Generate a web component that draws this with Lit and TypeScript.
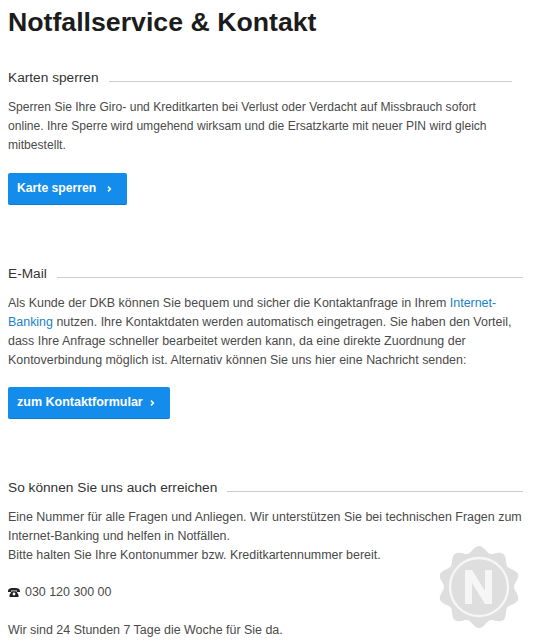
import { LitElement, html, css } from "lit";
import { customElement } from "lit/decorators.js";

@customElement("app-root")
export class AppRoot extends LitElement {
  static styles = css`
    :host {
      display: block;
      position: relative;
      width: 534px;
      height: 642px;
      overflow: hidden;
      background: #fff;
      font-family: "Liberation Sans", Arial, sans-serif;
      color: #4a4a4a;
      font-size: 12.45px;
      line-height: 19px;
    }
    .page { padding: 6px 11px 0 8px; }
    h1 {
      margin: 0 0 29px;
      font-size: 26.7px;
      line-height: 32px;
      font-weight: 700;
      color: #1c1c1c;
    }
    .head {
      display: flex;
      align-items: center;
      gap: 10px;
      height: 20px;
      margin: 0 0 11px;
      font-size: 13.7px;
      font-weight: 400;
      color: #333;
    }
    .head::after {
      content: "";
      flex: 1;
      height: 1px;
      margin-top: 8px;
      background: #ccc;
    }
    .s1 { margin-right: 11px; font-size: 12.1px; }
    p { margin: 0; }
    a { color: #1a7fc9; text-decoration: none; }
    .btn {
      display: inline-flex;
      align-items: center;
      gap: 7px;
      height: 32px;
      padding: 0 15px 0 9px;
      margin-top: 17px;
      background: #148ceb;
      border-radius: 2px;
      color: #fff;
      font-weight: 700;
      font-size: 12.5px;
      border-bottom: 1px solid #1078cc;
      box-sizing: border-box;
    }
    .s1 .btn { font-size: 12.2px; gap: 11px; margin-top: 18px; }
    .btn svg { display: block; }
    .s2 { margin-top: 58px; }
    .s3 { margin-top: 58px; }
    .phone { margin-top: 18px; display: flex; align-items: center; gap: 5px; }
    .phone svg { display: block; }
    .closing { margin-top: 19px; }
    .seal {
      position: absolute;
      left: 437px;
      top: 545px;
      width: 84px;
      height: 84px;
    }
  `;

  chevron() {
    return html`<svg width="5" height="6" viewBox="0 0 5 6"><path d="M1 .6 L3.4 3 L1 5.4" fill="none" stroke="#fff" stroke-width="1.5"/></svg>`;
  }

  render() {
    const n = 10;
    const R = 38, amp = 3;
    let d = "";
    for (let i = 0; i <= 180; i++) {
      const t = (i / 180) * Math.PI * 2;
      const r = R + amp * Math.cos(n * t);
      const x = 42 + r * Math.sin(t);
      const y = 42 - r * Math.cos(t);
      d += (i ? "L" : "M") + x.toFixed(2) + " " + y.toFixed(2);
    }
    d += "Z";
    return html`
      <div class="page">
        <h1>Notfallservice &amp; Kontakt</h1>
        <section class="s1">
          <h2 class="head">Karten sperren</h2>
          <p>Sperren Sie Ihre Giro- und Kreditkarten bei Verlust oder Verdacht auf Missbrauch sofort online. Ihre Sperre wird umgehend wirksam und die Ersatzkarte mit neuer PIN wird gleich mitbestellt.</p>
          <div class="btn">Karte sperren ${this.chevron()}</div>
        </section>
        <section class="s2">
          <h2 class="head">E-Mail</h2>
          <p>Als Kunde der DKB können Sie bequem und sicher die Kontaktanfrage in Ihrem <a>Internet-Banking</a> nutzen. Ihre Kontaktdaten werden automatisch eingetragen. Sie haben den Vorteil, dass Ihre Anfrage schneller bearbeitet werden kann, da eine direkte Zuordnung der Kontoverbindung möglich ist. Alternativ können Sie uns hier eine Nachricht senden:</p>
          <div class="btn">zum Kontaktformular ${this.chevron()}</div>
        </section>
        <section class="s3">
          <h2 class="head">So können Sie uns auch erreichen</h2>
          <p>Eine Nummer für alle Fragen und Anliegen. Wir unterstützen Sie bei technischen Fragen zum Internet-Banking und helfen in Notfällen.<br />Bitte halten Sie Ihre Kontonummer bzw. Kreditkartennummer bereit.</p>
          <div class="phone">
            <svg width="12" height="9" viewBox="0 0 12 9"><path fill="#222" d="M0 3 C0 .5 3 0 6 0 S12 .5 12 3 L12 4 L9 4 L9 2.6 L3 2.6 L3 4 L0 4Z M3.6 3.2 H8.4 L10.5 7 V9 H1.5 V7Z"/><circle cx="6" cy="6" r="1.4" fill="#fff"/></svg>
            <span>030 120 300 00</span>
          </div>
          <p class="closing">Wir sind 24 Stunden 7 Tage die Woche für Sie da.</p>
        </section>
      </div>
      <svg class="seal" viewBox="0 0 84 84">
        <path d="${d}" fill="#dedede"/>
        <circle cx="42" cy="42" r="29" fill="none" stroke="#f6f6f6" stroke-width="2.4"/>
        <path d="M28 25 H35 L48 46 V25 H55 V59 H48 L35 38 V59 H28Z" fill="#f6f6f6"/>
      </svg>
    `;
  }
}
